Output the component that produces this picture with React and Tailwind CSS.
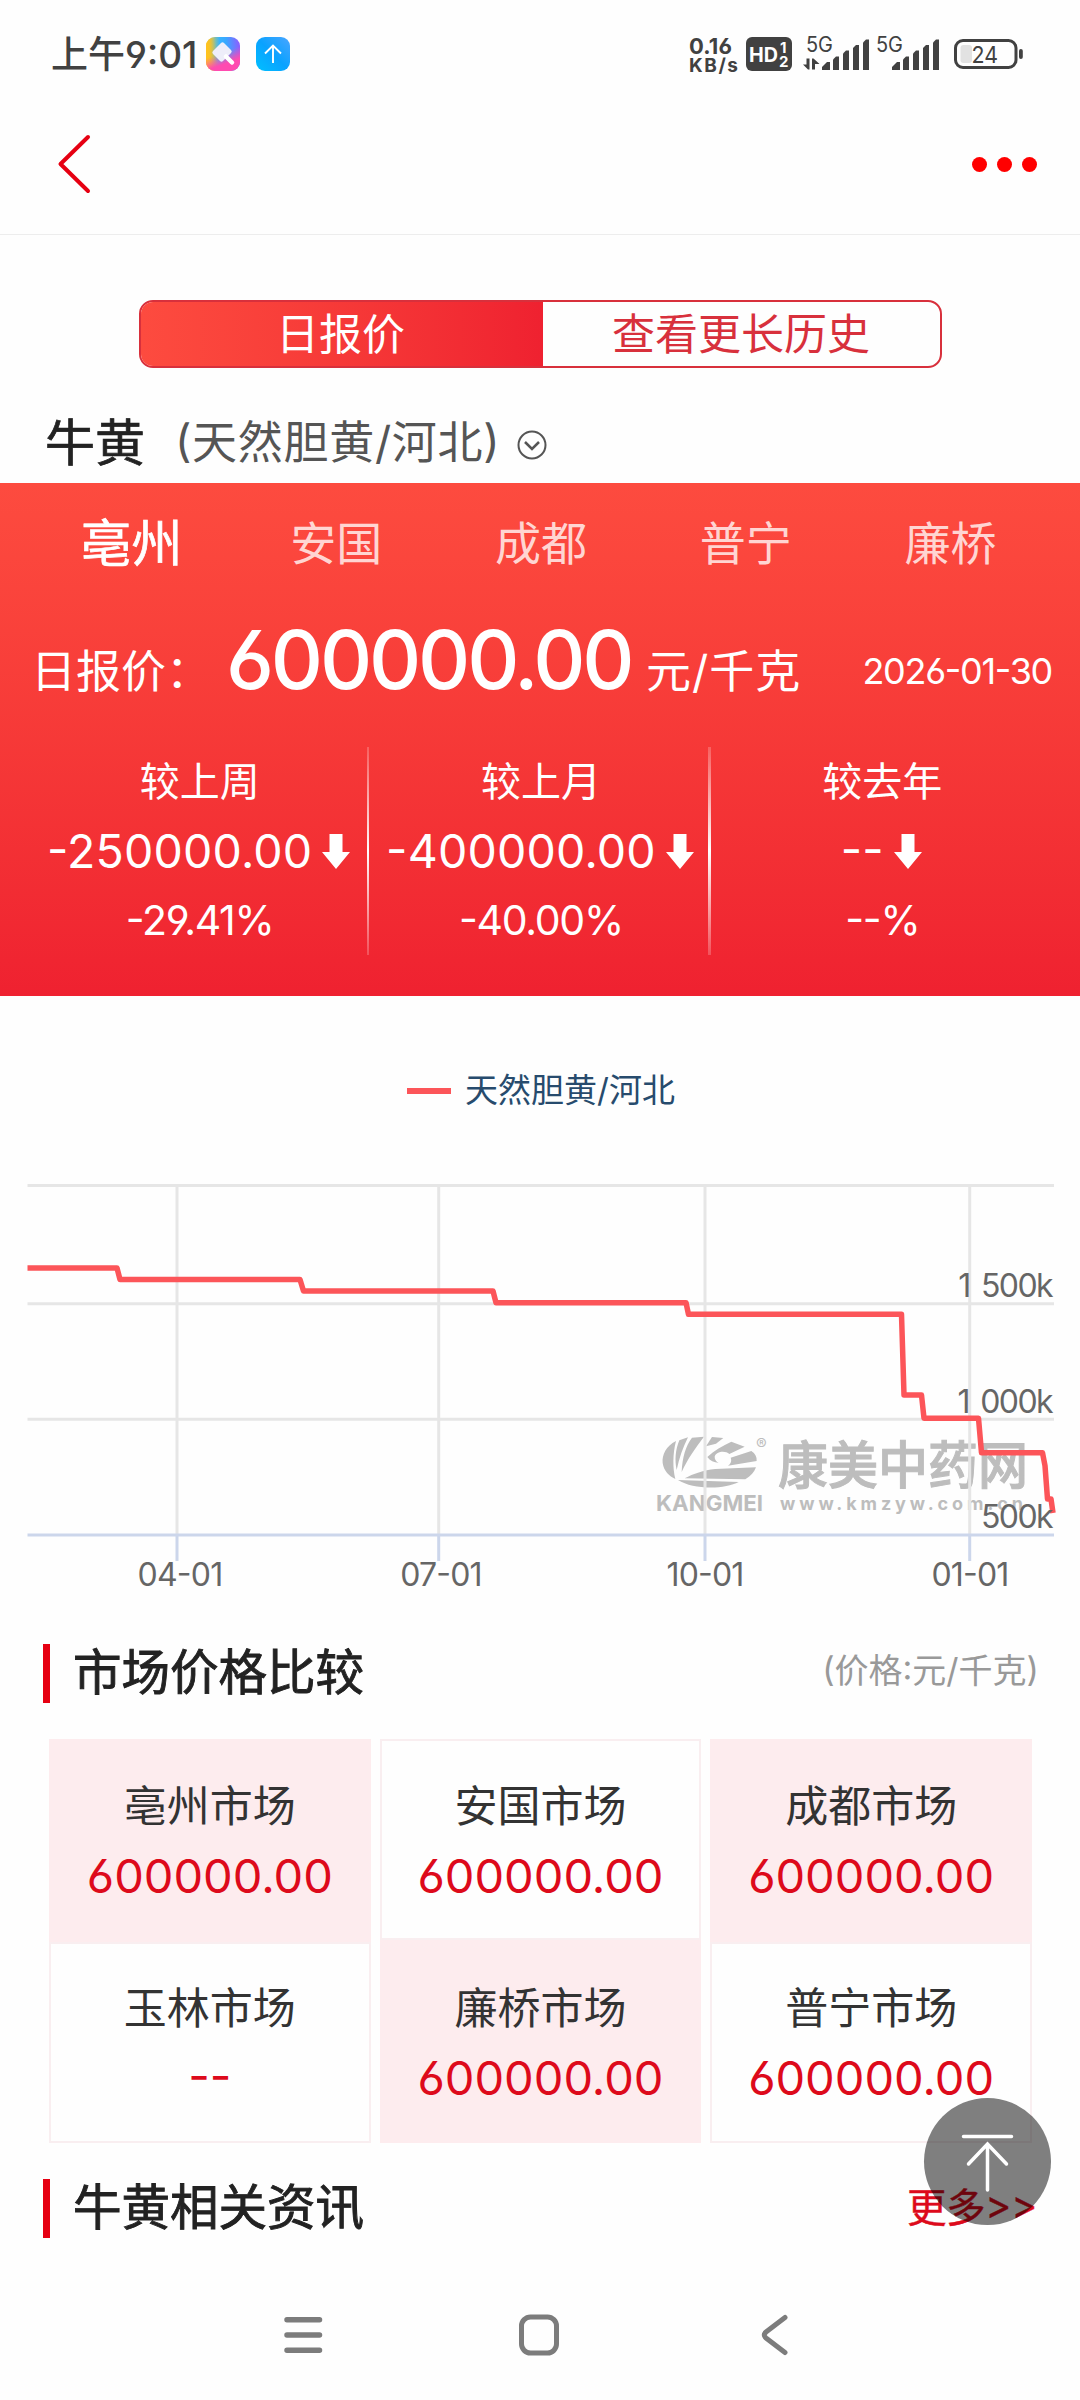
import React from 'react';

const cities = ['亳州', '安国', '成都', '普宁', '廉桥'];

const changes = [
  { label: '较上周', value: '-250000.00', percent: '-29.41%' },
  { label: '较上月', value: '-400000.00', percent: '-40.00%' },
  { label: '较去年', value: '--', percent: '--%' },
];

// one entry per column, top to bottom
const marketColumns = [
  [
    { name: '亳州市场', price: '600000.00', filled: true },
    { name: '玉林市场', price: '--', filled: false },
  ],
  [
    { name: '安国市场', price: '600000.00', filled: false },
    { name: '廉桥市场', price: '600000.00', filled: true },
  ],
  [
    { name: '成都市场', price: '600000.00', filled: true },
    { name: '普宁市场', price: '600000.00', filled: false },
  ],
];

const xTicks = [
  { x: 177, label: '04-01', textX: 180 },
  { x: 438.7, label: '07-01', textX: 441 },
  { x: 705, label: '10-01', textX: 705 },
  { x: 969.7, label: '01-01', textX: 970 },
];

function SignalBars({ x }) {
  return (
    <g fill="#414141">
      <path d={`M${x} 70v-3l5-5h3v8z`} />
      <path d={`M${x + 11} 70V59.500l3-3h3v13.500z`} />
      <path d={`M${x + 21} 70V53.500l3-3h3v19.500z`} />
      <path d={`M${x + 31} 70V48l3-3h3v25z`} />
      <path d={`M${x + 41} 70V42.500l3-3h3v30.500z`} />
    </g>
  );
}

function StatusBar() {
  return (
    <div className="h-[108px] pl-[51px] pr-14 flex items-center justify-between">
      <div className="flex items-center">
        <span className="w-[155px] text-[37px] leading-none font-medium text-[#414141] whitespace-nowrap">上午9:01</span>
        <svg width="84" height="36" viewBox="206 36 84 36" fill="none">
          <defs>
            <linearGradient id="brushBase" x1="0" y1="0.3" x2="1" y2="0.2">
              <stop offset="0" stopColor="#ffc31f" />
              <stop offset="0.3" stopColor="#35baff" />
              <stop offset="0.6" stopColor="#39a8ff" />
              <stop offset="1" stopColor="#8f5cff" />
            </linearGradient>
            <linearGradient id="brushYellow" x1="0" y1="0" x2="1" y2="0">
              <stop offset="0.05" stopColor="#ffc31f" />
              <stop offset="0.4" stopColor="#ffc31f" stopOpacity="0" />
            </linearGradient>
            <linearGradient id="brushPink" x1="0.3" y1="0.2" x2="0.6" y2="1">
              <stop offset="0.35" stopColor="#ff4bb0" stopOpacity="0" />
              <stop offset="0.75" stopColor="#ff4bb0" />
            </linearGradient>
            <linearGradient id="upBlue" x1="0" y1="1" x2="1" y2="0">
              <stop offset="0" stopColor="#00c0ff" />
              <stop offset="0.5" stopColor="#0aa2ff" />
              <stop offset="1" stopColor="#4aa5ff" />
            </linearGradient>
          </defs>
          <rect x="206" y="37" width="34" height="34" rx="9" fill="url(#brushBase)" />
          <rect x="206" y="37" width="34" height="34" rx="9" fill="url(#brushYellow)" />
          <rect x="206" y="37" width="34" height="34" rx="9" fill="url(#brushPink)" />
          <path d="M221 43q1.500-1.500 3 0l7 7q1.500 1.500 0 3l-8 8q-1.500 1.500-3 0l-7-7q-1.500-1.500 0-3z" fill="#eeeefa" />
          <path d="M226 56.500l6 6" stroke="#fff" strokeWidth="4.500" strokeLinecap="round" />
          <rect x="256" y="37" width="34" height="34" rx="9" fill="url(#upBlue)" />
          <path d="M273 63V46M265 53.500l8-8 8 8" stroke="#fff" strokeWidth="1.900" />
        </svg>
      </div>
      <svg width="336" height="44" viewBox="688 32 336 44" fontFamily="Inter, sans-serif">
        <g fill="#414141" fontWeight="700">
          <text x="689" y="54" fontSize="22" textLength="43">0.16</text>
          <text x="689" y="72" fontSize="19" textLength="49">KB/s</text>
        </g>
        <rect x="746" y="37" width="46" height="34" rx="6" fill="#414141" />
        <g fill="#fff" fontWeight="700">
          <text x="749" y="61.500" fontSize="20" textLength="29" lengthAdjust="spacingAndGlyphs">HD</text>
          <text x="780" y="52.500" fontSize="15">1</text>
          <text x="779" y="66.500" fontSize="15">2</text>
        </g>
        <g fill="#414141" fontSize="21">
          <text x="806" y="52" textLength="27" lengthAdjust="spacingAndGlyphs">5G</text>
          <text x="876" y="52" textLength="27" lengthAdjust="spacingAndGlyphs">5G</text>
        </g>
        <path d="M803 64.500h3.500v-6h3v11h-1.500zM812 69.500V58.500h1.500l6 5.500h-4.500v5.500z" fill="#414141" />
        <SignalBars x={822} />
        <SignalBars x={892} />
        <rect x="955.500" y="40.500" width="60.500" height="27" rx="7.500" fill="none" stroke="#414141" strokeWidth="3" />
        <rect x="960.500" y="45" width="11.500" height="18" rx="3" fill="#e2e2e2" />
        <rect x="1019" y="49" width="3.800" height="10" rx="1.900" fill="#414141" />
        <text x="971.500" y="63" fontSize="23.500" fill="#414141" textLength="26.500" lengthAdjust="spacingAndGlyphs">24</text>
      </svg>
    </div>
  );
}

function NavBar() {
  return (
    <div className="h-[127px] pb-[14px] pl-[57px] pr-[43px] flex items-center justify-between border-b border-[#ededed]">
      <svg width="36" height="64" viewBox="57 132 36 64" fill="none">
        <path d="M88 137L60.500 164 88 191" stroke="#e60012" strokeWidth="4" strokeLinecap="round" strokeLinejoin="round" />
      </svg>
      <div className="flex gap-2.5">
        <i className="size-[15px] rounded-full bg-[#ff0000]" />
        <i className="size-[15px] rounded-full bg-[#ff0000]" />
        <i className="size-[15px] rounded-full bg-[#ff0000]" />
      </div>
    </div>
  );
}

function DownArrow() {
  return (
    <svg width="28" height="35" viewBox="0 0 28 35" className="shrink-0">
      <path d="M7.500 0h13v18H28L14 35 0 18h7.500z" fill="#fff" />
    </svg>
  );
}

function PricePanel() {
  return (
    <div className="h-[513px] bg-linear-to-b from-[#fd4b3f] to-[#ef2130] text-white">
      <div className="h-[118px] pt-0.5 pl-[29px] pr-[27px] grid grid-cols-5 items-center text-center leading-none">
        {cities.map((city, i) => (
          <span key={city} className={i === 0 ? 'text-[51px] [-webkit-text-stroke:0.7px]' : 'text-[46px] text-[#ffd5d2]'}>{city}</span>
        ))}
      </div>
      <div className="h-[140px] pl-[31px] pr-7 flex items-center leading-none whitespace-nowrap">
        <span className="w-[195px] text-[45px]">日报价：</span>
        <span className="w-[420px] mb-[21px] text-[81px] font-medium tracking-[-3.200px]">600000.00</span>
        <span className="text-[45px] tracking-[1px]">元/千克</span>
        <span className="ml-auto text-[36px] tracking-[-1.300px]">2026-01-30</span>
      </div>
      <div className="mt-1.5 h-[208px] px-7 grid grid-cols-3 leading-none">
        {changes.map((item, i) => (
          <div key={item.label} className="relative flex flex-col items-center">
            <div className="h-[68px] pt-0.5 pl-0.5 flex items-center text-[40px]">{item.label}</div>
            <div className="h-[72px] flex items-center gap-2.5 text-[46.500px] tracking-[0.200px]">
              {item.value}
              <DownArrow />
            </div>
            <div className="h-[66px] pl-0.5 flex items-center text-[41px] tracking-[-1.300px]">{item.percent}</div>
            {i < 2 && <div className="absolute right-0 inset-y-0 w-[2.500px] bg-linear-to-b from-white/20 via-white to-white/20" />}
          </div>
        ))}
      </div>
    </div>
  );
}

function Watermark() {
  return (
    <g fill="#bdbdbd">
      <g transform="translate(650 1425) scale(0.3333)">
        <path d="M78 48C48 64 36 88 38 114c3 24 20 40 38 48-8-32-8-76 2-114z" />
        <path d="M88 46l26-9c-16 32-26 62-34 98-6-30-4-60 8-89z" />
        <path d="M126 38l36-3c-24 32-48 64-67 106 2-44 12-78 31-103z" />
        <path d="M186 36l34 3-22 17-30 8z" />
        <path d="M172 96c20-20 46-34 72-46l40 15-46 22c-12-12-40-8-44 8 0 8 4 14 12 18-14 0-26-6-34-17z" />
        <path d="M242 98l62-20c12 8 17 18 16 30l-86 14c8-6 12-14 8-24z" />
        <path d="M196 132l122-5c-6 16-16 27-32 36l-182-3c26-14 56-24 92-28z" />
        <path d="M84 165l182 6c-40 22-136 24-182-6z" />
      </g>
      <text x="656" y="1511" fontSize="22" fontWeight="700" textLength="107" lengthAdjust="spacingAndGlyphs">KANGMEI</text>
      <text x="756" y="1450" fontSize="16">®</text>
      <text x="778" y="1484" fontSize="51" fontWeight="500" stroke="#bdbdbd" strokeWidth="1" textLength="250" lengthAdjust="spacingAndGlyphs">康美中药网</text>
      <text x="780" y="1509.500" fontSize="18" fontWeight="700" textLength="243">www.kmzyw.com.cn</text>
    </g>
  );
}

function PriceChart() {
  return (
    <svg width="1080" height="624" viewBox="0 996 1080 624" className="block" fontFamily="Inter, 'Noto Sans CJK SC', sans-serif">
      <path d="M407 1091h44" stroke="#fc5559" strokeWidth="6" />
      <text x="465" y="1101.500" fontSize="33" fill="#274b6d">天然胆黄/河北</text>
      <Watermark />
      <path d="M27.500 1185.500H1054M27.500 1303.800H1054M27.500 1419.300H1054" stroke="#e6e6e6" strokeWidth="3" />
      {xTicks.map(tick => (
        <g key={tick.label}>
          <path d={`M${tick.x} 1185V1535`} stroke="#e6e6e6" strokeWidth="3" />
          <path d={`M${tick.x} 1535v26`} stroke="#ccd6eb" strokeWidth="3" />
        </g>
      ))}
      <path d="M27.500 1535H1054" stroke="#ccd6eb" strokeWidth="3" />
      <path
        d="M27.500 1268H117l3 11.500H300l3.500 11.500H493l3 11.700H686l2.500 11.600H901.500L904 1395h17.500l2.500 23.300h54.500l3 34.400h61l2.500 13 2.500 33.300h3.500l2 14"
        fill="none"
        stroke="#fc5559"
        strokeWidth="5.500"
        strokeLinejoin="round"
      />
      <g fill="#666" fontSize="32" textAnchor="end" letterSpacing="-1.600" wordSpacing="4">
        <text x="1052" y="1297">1 500k</text>
        <text x="1052" y="1413">1 000k</text>
        <text x="1052" y="1528">500k</text>
      </g>
      <g fill="#666" fontSize="32" textAnchor="middle" letterSpacing="-0.800">
        {xTicks.map(tick => (
          <text key={tick.label} x={tick.textX} y="1586">{tick.label}</text>
        ))}
      </g>
    </svg>
  );
}

function SectionHeader({ title, children }) {
  return (
    <div className="pl-[43px] flex items-center leading-none">
      <i className="w-[7px] h-[59px] bg-[#e60012]" />
      <h2 className="ml-[23px] text-[48.500px] text-[#222] [-webkit-text-stroke:0.9px]">{title}</h2>
      {children}
    </div>
  );
}

function MarketCard({ market, className }) {
  return (
    <div className={`flex flex-col items-center ${className} ${market.filled ? 'h-[203px] bg-[#fdecee]' : 'h-[201px] border-2 border-[#f9eef0]'}`}>
      <div className="text-[43px] text-[#333]">{market.name}</div>
      <div className="mt-6 text-[47px] text-[#dd0a1b]">{market.price}</div>
    </div>
  );
}

// keeps the texts of a row level although the cards differ in height
function cardPadding(market, row) {
  if (market.filled) return row === 0 ? 'pt-[46px]' : 'pt-[47px]';
  return row === 0 ? 'pt-[44px]' : 'pt-[43px]';
}

function App() {
  return (
    <div className="relative w-[1080px] h-[2400px] overflow-hidden bg-[#fefefe] font-[Inter,'Noto_Sans_CJK_SC',sans-serif] [font-feature-settings:'cv03','cv04','case']">
      <StatusBar />
      <NavBar />

      {/* Tabs */}
      <div className="mt-[65px] mx-auto w-[803px] h-[68px] grid grid-cols-[402px_1fr] rounded-[14px] border-2 border-[#d8303c] overflow-hidden text-[43px] leading-none">
        <div className="pr-0.5 flex items-center justify-center bg-linear-to-r from-[#fd4b3f] to-[#ef2130] text-white">日报价</div>
        <div className="flex items-center justify-center text-[#d8303c]">查看更长历史</div>
      </div>

      {/* Product name */}
      <div className="h-[115px] pt-[34px] pl-[45px] flex items-center leading-none">
        <span className="text-[50px] text-[#222] [-webkit-text-stroke:0.7px]">牛黄</span>
        <span className="ml-[30px] text-[45px] tracking-[0.700px] text-[#555]">(天然胆黄/河北)</span>
        <svg width="30" height="30" viewBox="0 0 30 30" fill="none" stroke="#555" strokeWidth="2" className="ml-[17px] mt-1">
          <circle cx="15" cy="15" r="13.500" />
          <path d="M8 12l7 7 7-7" strokeWidth="2.500" />
        </svg>
      </div>

      <PricePanel />
      <PriceChart />

      {/* Market price comparison */}
      <div className="h-[107px] mb-3 grid items-center">
        <SectionHeader title="市场价格比较">
          <span className="ml-auto mr-[41px] mb-1.5 text-[34px] text-[#999]">(价格:元/千克)</span>
        </SectionHeader>
      </div>
      <div className="h-[404px] mx-12 pl-px grid grid-cols-3 gap-x-[9px] leading-none">
        {marketColumns.map((column, i) => (
          <div key={i}>
            {column.map((market, row) => (
              <MarketCard key={market.name} market={market} className={cardPadding(market, row)} />
            ))}
          </div>
        ))}
      </div>

      {/* Related news */}
      <div className="h-[131px] grid items-center">
        <SectionHeader title="牛黄相关资讯">
          <span className="ml-auto mr-[43px] text-[39.500px] tracking-[-0.300px] text-[#dd0a1b] [-webkit-text-stroke:0.4px]">更多&gt;&gt;</span>
        </SectionHeader>
      </div>

      {/* System navigation */}
      <div className="h-[126px] pb-1 pl-[283px] pr-[292px] flex items-center justify-between">
        <svg width="40" height="42" viewBox="283 2314 40 42" stroke="#7c7c7c" strokeWidth="5.500" strokeLinecap="round">
          <path d="M287 2319.700h32.500M287 2335h32.500M287 2350.300h32.500" />
        </svg>
        <svg width="42" height="42" viewBox="518 2314 42 42" fill="none" stroke="#7c7c7c" strokeWidth="5" className="mr-1.5">
          <rect x="521.500" y="2317" width="35" height="36" rx="9" />
        </svg>
        <svg width="28" height="42" viewBox="761 2314 28 42" fill="none" stroke="#7c7c7c" strokeWidth="5" strokeLinecap="round">
          <path d="M786 2317.500l-19 14.500q-3.500 3 0 6l19 14.500" />
        </svg>
      </div>

      {/* Back to top */}
      <button className="absolute left-[924px] top-[2098px] size-[127px] rounded-full bg-black/50">
        <svg width="127" height="127" viewBox="924 2098 127 127" fill="none" stroke="#fff" strokeWidth="3.500" strokeLinecap="round">
          <path d="M963.500 2136.500h48M987.500 2190v-46M968.500 2164l19-20 19 20" />
        </svg>
      </button>
    </div>
  );
}

export default App;
